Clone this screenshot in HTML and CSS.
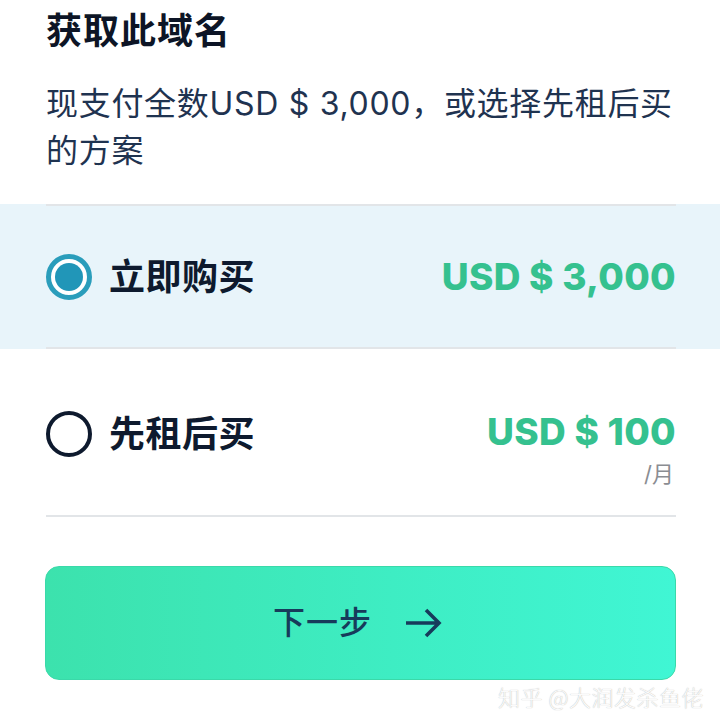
FILE: index.html
```html
<!DOCTYPE html>
<html lang="zh">
<head>
<meta charset="utf-8">
<link rel="stylesheet" href="styles.css">
</head>
<body>
<div class="page">
  <header class="head">
    <h1 class="title">获取此域名</h1>
    <p class="subtitle">现支付全数USD $ 3,000，或选择先租后买的方案</p>
  </header>

  <section class="options">
    <div class="option option-selected">
      <div class="option-inner option-first">
        <span class="radio radio-on"><span class="radio-dot"></span></span>
        <span class="option-label">立即购买</span>
        <span class="price-col">
          <span class="price">USD $ 3,000</span>
        </span>
      </div>
    </div>
    <div class="option">
      <div class="option-inner option-top">
        <span class="radio radio-off"></span>
        <span class="option-label">先租后买</span>
        <span class="price-col">
          <span class="price">USD $ 100</span>
          <span class="per">/月</span>
        </span>
      </div>
    </div>
  </section>

  <div class="btn-wrap">
    <button class="btn-next">
      <span class="btn-text">下一步</span>
      <svg class="btn-arrow" width="38" height="32" viewBox="0 0 38 32" fill="none">
        <path d="M2 16 H34 M22 3 L35 16 L22 29" stroke="#173b5b" stroke-width="3.6" stroke-linecap="butt" stroke-linejoin="miter"/>
      </svg>
    </button>
  </div>

  <div class="watermark">知乎 @大润发杀鱼佬</div>
</div>
</body>
</html>
```

FILE: styles.css
```css
* { box-sizing: border-box; }
html, body { margin: 0; padding: 0; background: #ffffff; }
body {
  font-family: Inter, "Noto Sans CJK SC", "Noto Sans", sans-serif;
  width: 720px;
  height: 723px;
  overflow: hidden;
}
.page { position: relative; width: 720px; height: 723px; }

.head { padding: 9px 44px 0 46px; }
.title {
  margin: 0;
  font-size: 36px;
  line-height: 44px;
  font-weight: 700;
  color: #0d1526;
  letter-spacing: 1px;
}
.subtitle {
  margin: 27px 0 0 0;
  font-size: 32px;
  line-height: 47px;
  font-weight: 400;
  color: #1f3350;
  letter-spacing: 0.7px;
}

.options { margin-top: 30px; }
.option { width: 100%; }
.option-selected { background: #e8f4fa; }
.option-inner {
  margin: 0 44px 0 46px;
  display: flex;
  border-bottom: 2px solid #e2e5e8;
}
.option-first {
  border-top: 2px solid #e2e5e8;
  align-items: center;
  height: 145px;
}
.option-top {
  align-items: flex-start;
  padding-top: 60px;
  padding-bottom: 26px;
}
.option-top .radio { margin-top: 2px; }
.option-top .option-label { margin-top: 2px; }

.radio {
  width: 46px;
  height: 46px;
  border-radius: 50%;
  flex: none;
  display: flex;
  align-items: center;
  justify-content: center;
}
.radio-on { border: 5px solid #2a9dbb; background: #ffffff; }
.radio-dot { width: 28px; height: 28px; border-radius: 50%; background: #2196b8; }
.radio-off { border: 4px solid #0e1a2e; background: #ffffff; }

.option-label {
  margin-left: 17px;
  font-size: 36px;
  line-height: 46px;
  font-weight: 700;
  color: #0e1a2e;
  letter-spacing: 0.5px;
}
.price-col {
  margin-left: auto;
  display: flex;
  flex-direction: column;
  align-items: flex-end;
}
.price {
  font-family: Inter, sans-serif;
  font-size: 37px;
  line-height: 46px;
  font-weight: 800;
  color: #35c18f;
  letter-spacing: 0.3px;
}
.per {
  margin-top: 4px;
  font-size: 22px;
  line-height: 30px;
  color: #8a8d92;
  margin-right: 2px;
}

.btn-wrap { padding: 49px 44px 0 45px; }
.btn-next {
  width: 100%;
  height: 114px;
  border: 1px solid #3ad9a9;
  border-radius: 14px;
  background: linear-gradient(90deg, #3ce2ad 0%, #3eedc3 55%, #40f6d4 100%);
  display: flex;
  align-items: center;
  justify-content: center;
  gap: 32px;
  padding: 0 6px 0 0;
  font-family: Inter, "Noto Sans CJK SC", sans-serif;
  cursor: pointer;
}
.btn-text {
  font-size: 32px;
  line-height: 40px;
  font-weight: 500;
  color: #173b5b;
  letter-spacing: 1px;
}
.btn-arrow { display: block; }

.watermark {
  position: absolute;
  right: 16px;
  bottom: 12px;
  font-size: 22px;
  line-height: 30px;
  color: #fbfbfb;
  text-shadow: 0 0 1px #a8a8a8;
  font-family: "Noto Sans CJK SC", sans-serif;
  font-weight: 300;
  letter-spacing: 0.5px;
}
```
